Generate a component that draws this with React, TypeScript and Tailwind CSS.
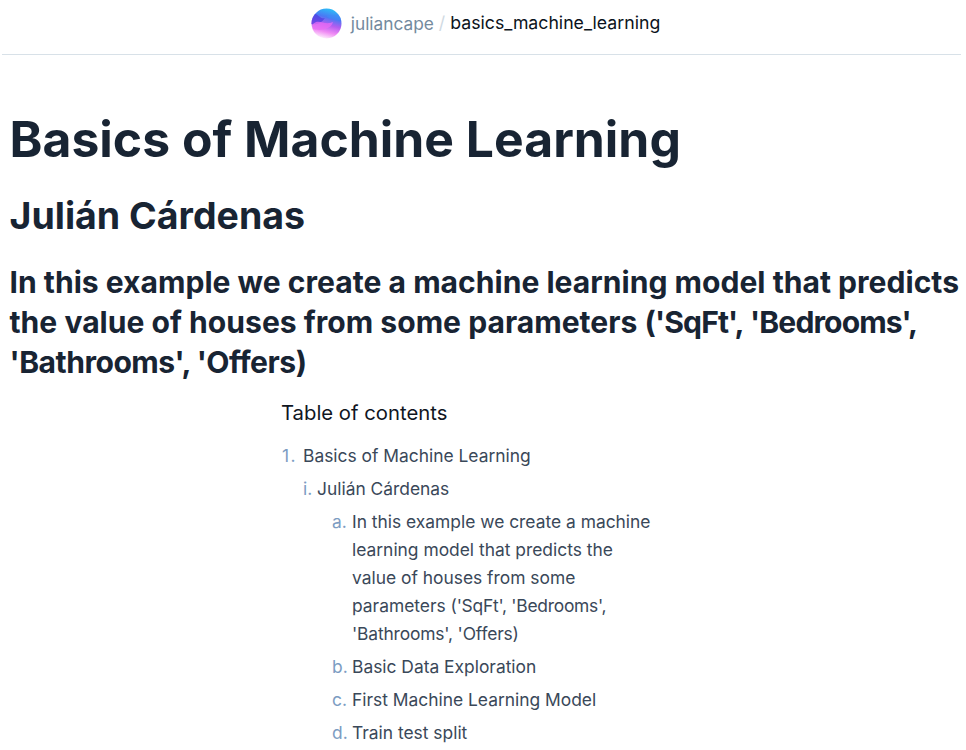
const FONT = "font-['Inter',sans-serif]";

function Avatar() {
  return (
    <svg width="31" height="31" viewBox="0 0 31 31" className="shrink-0">
      <defs>
        <linearGradient id="avatarBase" x1="0.7" y1="0" x2="0.45" y2="1">
          <stop offset="0" stopColor="#27c8f8" />
          <stop offset="0.32" stopColor="#4a78f4" />
          <stop offset="0.55" stopColor="#b45cf0" />
          <stop offset="0.78" stopColor="#f08cf4" />
          <stop offset="1" stopColor="#fff4fd" />
        </linearGradient>
        <clipPath id="avatarClip">
          <circle cx="15.5" cy="15.5" r="15" />
        </clipPath>
      </defs>
      <g clipPath="url(#avatarClip)">
        <rect width="31" height="31" fill="url(#avatarBase)" />
        <path d="M0 6 C6 3 9 12 14 10 C10 16 4 17 0 16 Z" fill="#4a3ce0" opacity="0.7" />
        <path d="M2 16 C8 10 13 18 22 14 C20 22 8 23 2 21 Z" fill="#e86cf4" opacity="0.75" />
        <path d="M15 8 C20 6 25 8 30 5 L30 12 C25 13 20 12 15 8 Z" fill="#3f8cf5" opacity="0.55" />
      </g>
    </svg>
  );
}

function Marker({ children, width }: { children: string; width: string }) {
  return <span className={`${width} shrink-0 text-[#7c9cc2]`}>{children}</span>;
}

const SUB_ITEMS = ["Basic Data Exploration", "First Machine Learning Model", "Train test split"];

export default function App() {
  return (
    <div className={`h-[750px] w-[966px] overflow-hidden bg-white ${FONT}`}>
      <div className="ml-[2px] w-[959px]">
        <header className="flex h-[55px] items-center justify-center border-b border-[#d8e1e8] pb-[7px] pl-[8px] text-[17.7px]">
          <Avatar />
          <span className="ml-[9px] text-[17.3px] text-[#738a9e]">juliancape</span>
          <span className="mx-[5px] text-[#d0dae3]">/</span>
          <span className="text-[#0b1320]">basics_machine_learning</span>
        </header>
      </div>

      <main className="pl-[9.5px] text-[#182433]">
        <h1 className="mt-[52px] text-[49.85px] leading-[64px] font-bold whitespace-nowrap">
          Basics of Machine Learning
        </h1>
        <h2 className="mt-[20px] text-[37.5px] leading-[50px] font-bold">Julián Cárdenas</h2>
        <h3 className="mt-[21px] w-[951px] text-[30.1px] leading-[40px] font-bold">
          In this example we create a machine learning model that predicts the value of houses from some parameters{" "}
          <span className="tracking-[-0.9px] [word-spacing:1px]">('SqFt', 'Bedrooms',</span>{" "}
          <span className="tracking-[-0.5px]">'Bathrooms', 'Offers)</span>
        </h3>

        <nav className="mt-[15px] ml-[272.5px] text-[17.4px] text-[#3a4859]">
          <div className="-ml-px text-[20.3px] leading-[32px] text-[#10161f]">Table of contents</div>
          <div className="mt-[10px] flex leading-[33px]">
            <Marker width="w-[21px] tracking-[1.5px]">1.</Marker>
            <span>Basics of Machine Learning</span>
          </div>
          <div className="ml-[21px] flex leading-[33px]">
            <Marker width="w-[14px]">i.</Marker>
            <span>Julián Cárdenas</span>
          </div>
          <div className="mt-[3px] ml-[50px] flex leading-[28px]">
            <Marker width="w-[20px]">a.</Marker>
            <span className="w-[302px]">
              In this example we create a machine learning model that predicts the value of houses from some parameters{" "}
              <span className="tracking-[-0.25px]">('SqFt', 'Bedrooms',</span>{" "}
              <span className="tracking-[-0.15px]">'Bathrooms', 'Offers)</span>
            </span>
          </div>
          <ol className="mt-[2px] ml-[50px]">
            {SUB_ITEMS.map((item, i) => (
              <li key={item} className="flex leading-[33px]">
                <Marker width="w-[20px]">{`${"bcd"[i]}.`}</Marker>
                <span>{item}</span>
              </li>
            ))}
          </ol>
        </nav>
      </main>
    </div>
  );
}
